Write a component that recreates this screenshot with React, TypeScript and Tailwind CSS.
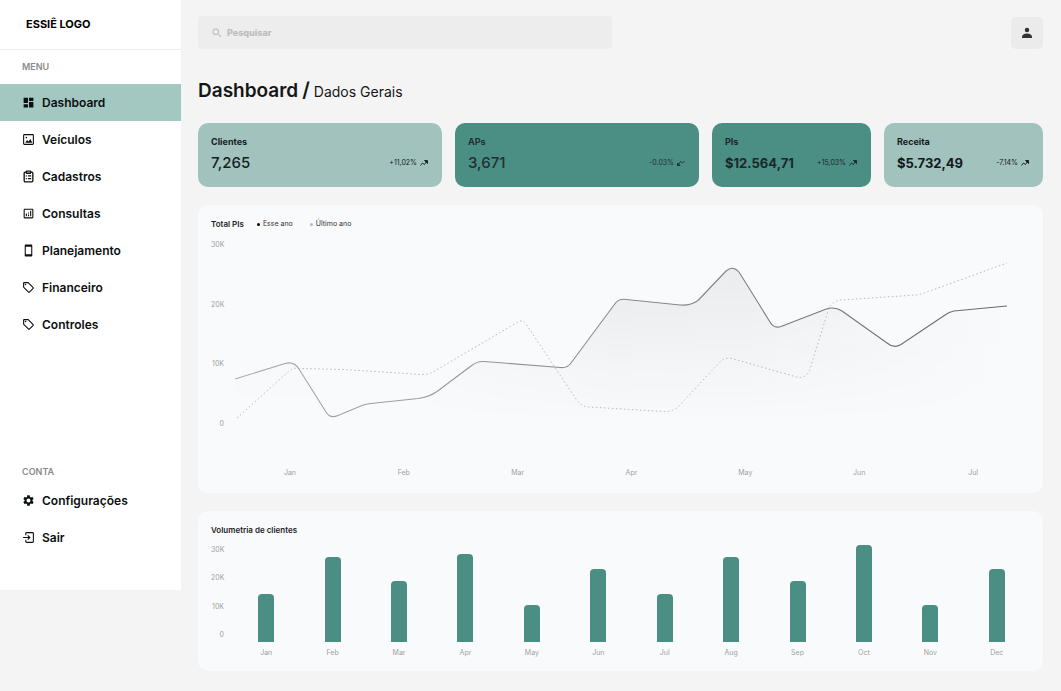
import type { ReactNode } from "react";
import {
  MdDashboard,
  MdOutlineAnalytics,
  MdOutlineSell,
  MdOutlineStayCurrentPortrait,
  MdSearch,
  MdSettings,
} from "react-icons/md";
import { LuClipboardList } from "react-icons/lu";

function PhotoIcon() {
  return (
    <svg viewBox="0 0 24 24" className="w-[13px] h-[13px]" fill="none" stroke="currentColor" strokeWidth="2">
      <rect x="3" y="3" width="18" height="18" rx="1.5" />
      <circle cx="8" cy="8.5" r="1.5" fill="currentColor" stroke="none" />
      <path d="M6 18l3.5-5 2.5 2.5 3.5-4.5L19 18z" fill="currentColor" stroke="none" />
    </svg>
  );
}

function ExitIcon() {
  return (
    <svg viewBox="0 0 24 24" className="w-[13px] h-[13px]" fill="none" stroke="currentColor" strokeWidth="2">
      <path d="M7 8V4.500Q7 3 8.500 3H19.500Q21 3 21 4.500V19.500Q21 21 19.500 21H8.500Q7 21 7 19.500V16" />
      <path d="M2 12h12M10.500 8l4 4-4 4" />
    </svg>
  );
}

function TrendIcon({ dip = false }: { dip?: boolean }) {
  return (
    <svg viewBox="0 0 16 12" className="w-2 h-1.5" fill="none" stroke="currentColor" strokeWidth="1.8">
      {dip ? (
        <>
          <path d="M3 9l4-6 4 3 4-4" />
          <path d="M1 6v5h5z" fill="currentColor" />
        </>
      ) : (
        <>
          <path d="M1 11l4-5 4 3 4-6" />
          <path d="M9 1h6v6z" fill="currentColor" />
        </>
      )}
    </svg>
  );
}

type MenuItem = { label: string; icon: ReactNode; active?: boolean };

const menu: MenuItem[] = [
  { label: "Dashboard", icon: <MdDashboard size={13} />, active: true },
  { label: "Veículos", icon: <PhotoIcon /> },
  { label: "Cadastros", icon: <LuClipboardList size={13} strokeWidth={2.4} /> },
  { label: "Consultas", icon: <MdOutlineAnalytics size={13} /> },
  { label: "Planejamento", icon: <MdOutlineStayCurrentPortrait size={13} /> },
  { label: "Financeiro", icon: <MdOutlineSell size={13} /> },
  { label: "Controles", icon: <MdOutlineSell size={13} /> },
];

const account: MenuItem[] = [
  { label: "Configurações", icon: <MdSettings size={13} /> },
  { label: "Sair", icon: <ExitIcon /> },
];

const stats = [
  { label: "Clientes", value: "7,265", change: "+11,02%", card: "bg-[#a1c2bd] text-[#14211f]", number: "text-[15px] font-medium" },
  { label: "APs", value: "3,671", change: "-0.03%", dip: true, card: "bg-[#4b8f84] text-[#242e33]", number: "text-[15px] font-medium" },
  { label: "PIs", value: "$12.564,71", change: "+15,03%", card: "bg-[#4b8f84] text-[#1c262a]", number: "text-[13px] font-bold" },
  { label: "Receita", value: "$5.732,49", change: "-7.14%", card: "bg-[#a1c2bd] text-[#111a1a]", number: "text-[13px] font-bold" },
];

const scale = ["30K", "20K", "10K", "0"];
const lineMonths = ["Jan", "Feb", "Mar", "Apr", "May", "Jun", "Jul"];

const bars = [
  { month: "Jan", height: 48 },
  { month: "Feb", height: 85 },
  { month: "Mar", height: 61 },
  { month: "Apr", height: 88 },
  { month: "May", height: 37 },
  { month: "Jun", height: 73 },
  { month: "Jul", height: 48 },
  { month: "Aug", height: 85 },
  { month: "Sep", height: 61 },
  { month: "Oct", height: 97 },
  { month: "Nov", height: 37 },
  { month: "Dec", height: 73 },
];

const currentYear =
  "M235 379L285 363.5Q294 361 299 369L326 412Q330 419 338 415.500L362 405.500Q366 404 371 403.500L418 398.500Q429 397 437 391.500L471 366Q477 361 484 361.500L560 367.500Q567 368.500 571 363L614 305Q618 299 624 299.300L680 305Q690 306 698 300.500L726 271Q733 265 739 272L770 322Q774 329 781 326.500L825 309.500Q834 306 842 311L887 343Q894 349 901 344.500L945 315Q949 312 954 311L1007 306";

const lastYear =
  "M237 418L288 372Q293 367 299 368.500L343 369.500L383 372L421 374.500Q428 375 433 372L518 322Q523 319 526 324L576 399Q581 407 589 407L664 411.500Q672 412 678 407L719 363Q724 357 732 358.500L795 376.500Q806 380 810 369L828 311Q831 301 841 300L916 295Q922 294 927 292L1007 263";

function MenuLink({ item }: { item: MenuItem }) {
  return (
    <li>
      <a
        href="#"
        aria-current={item.active ? "page" : undefined}
        className={`flex items-center gap-[7px] h-[37px] pl-[22px] text-[12px] font-semibold text-[#0c0f10] ${
          item.active ? "bg-[#a3c7c1]" : ""
        }`}
      >
        {item.icon}
        {item.label}
      </a>
    </li>
  );
}

function Sidebar() {
  return (
    <aside className="w-[181px] shrink-0 self-start bg-white pb-[34px]">
      <div className="h-[50px] flex items-center pl-[26px] border-b border-[#ececec] text-[11px] font-bold text-black">
        ESSIÊ LOGO
      </div>
      <nav>
        <h2 className="h-[34px] flex items-center pl-[22px] text-[9px] font-semibold text-[#8b8b8b]">MENU</h2>
        <ul>
          {menu.map((item) => (
            <MenuLink key={item.label} item={item} />
          ))}
        </ul>
        <h2 className="mt-[119px] h-5 flex items-center pl-[22px] text-[9px] font-semibold text-[#8b8b8b]">CONTA</h2>
        <ul>
          {account.map((item) => (
            <MenuLink key={item.label} item={item} />
          ))}
        </ul>
      </nav>
    </aside>
  );
}

function LineChart() {
  return (
    <section className="mt-[18px] rounded-[10px] bg-[#f9fafc] px-[13px] pt-[13px] pb-[14px]">
      <div className="flex items-center h-3">
        <h2 className="text-[8px] font-semibold text-[#1c1c1c]">Total PIs</h2>
        <span className="flex items-center gap-[3px] ml-[13px] text-[7px] text-[#333]">
          <span className="w-[3px] h-[3px] rounded-full bg-black" />
          Esse ano
        </span>
        <span className="flex items-center gap-[3px] ml-[17px] text-[7px] text-[#333]">
          <span className="w-[3px] h-[3px] rounded-full bg-[#b3b7bd]" />
          Último ano
        </span>
      </div>
      <div className="flex mt-[9px] gap-[9px]">
        <div className="w-[13px] h-[191px] flex flex-col justify-between text-right text-[7px] leading-[12px] text-[#a0a1a3]">
          {scale.map((step) => (
            <span key={step}>{step}</span>
          ))}
        </div>
        <div className="flex-1">
          <svg
            viewBox="233 239 797 221"
            preserveAspectRatio="none"
            className="block w-full h-[221px]"
            role="img"
            aria-label="Total PIs por mês"
          >
            <defs>
              <linearGradient id="fadeDown" x1="0" y1="268" x2="0" y2="420" gradientUnits="userSpaceOnUse">
                <stop offset="0" stopColor="white" />
                <stop offset="1" stopColor="black" />
              </linearGradient>
              <mask id="areaMask" maskUnits="userSpaceOnUse" x="233" y="239" width="797" height="221">
                <rect x="233" y="239" width="797" height="221" fill="url(#fadeDown)" />
              </mask>
              <linearGradient id="area" x1="400" y1="0" x2="1007" y2="0" gradientUnits="userSpaceOnUse">
                <stop offset="0" stopColor="#1c1c1c" stopOpacity="0.01" />
                <stop offset="0.35" stopColor="#1c1c1c" stopOpacity="0.07" />
                <stop offset="0.6" stopColor="#1c1c1c" stopOpacity="0.06" />
                <stop offset="1" stopColor="#1c1c1c" stopOpacity="0" />
              </linearGradient>
              <linearGradient id="stroke" x1="235" y1="0" x2="1007" y2="0" gradientUnits="userSpaceOnUse">
                <stop offset="0" stopColor="#a9abad" />
                <stop offset="1" stopColor="#68696b" />
              </linearGradient>
            </defs>
            <path d={`${currentYear}V424H235Z`} fill="url(#area)" mask="url(#areaMask)" />
            <path d={lastYear} fill="none" stroke="#a9bfc4" strokeDasharray="1.5 2.5" />
            <path d={currentYear} fill="none" stroke="url(#stroke)" strokeWidth="1.1" />
          </svg>
          <div className="grid grid-cols-7 mt-[7px] text-center text-[7px] leading-[12px] text-[#a0a1a3]">
            {lineMonths.map((month) => (
              <span key={month}>{month}</span>
            ))}
          </div>
        </div>
      </div>
    </section>
  );
}

function BarChart() {
  return (
    <section className="mt-[18px] rounded-[10px] bg-[#f9fafc] px-[13px] pt-[13px] pb-3">
      <h2 className="text-[8px] leading-[12px] font-semibold text-[#1c1c1c]">Volumetria de clientes</h2>
      <div className="flex mt-2 gap-[9px]">
        <div className="w-[13px] h-[97px] flex flex-col justify-between text-right text-[7px] leading-[12px] text-[#a0a1a3]">
          {scale.map((step) => (
            <span key={step}>{step}</span>
          ))}
        </div>
        <div className="flex-1 grid grid-cols-12">
          {bars.map((bar) => (
            <div key={bar.month} className="flex flex-col items-center h-[115px] justify-end">
              <div className="w-4 rounded-t-[4px] bg-[#4b8f84]" style={{ height: bar.height }} />
              <span className="mt-[5px] text-[7px] leading-[12px] text-[#a0a1a3]">{bar.month}</span>
            </div>
          ))}
        </div>
      </div>
    </section>
  );
}

export default function App() {
  return (
    <div className="flex min-h-screen bg-[#f4f4f4] font-['Inter',sans-serif]">
      <Sidebar />
      <main className="flex-1 min-w-0 pl-[17px] pr-[18px] pt-4 pb-5">
        <header className="flex items-center justify-between">
          <label className="flex items-center gap-1 w-[49%] h-[33px] rounded-[4px] bg-[#ededed] pl-[13px] text-[#b9b9b9]">
            <MdSearch size={12} className="shrink-0" />
            <input
              type="search"
              aria-label="Pesquisar"
              placeholder="Pesquisar"
              className="flex-1 min-w-0 bg-transparent outline-none text-[9px] font-extrabold text-[#555] placeholder:text-[#bdbdbd]"
            />
          </label>
          <button type="button" aria-label="Perfil" className="w-8 h-8 rounded-[5px] bg-[#ebebeb] flex items-center justify-center">
            <svg viewBox="0 0 24 24" className="w-3 h-3" fill="#333">
              <circle cx="12" cy="6" r="4.500" />
              <path d="M2 22v-2c0-4 4-7 10-7s10 3 10 7v2z" />
            </svg>
          </button>
        </header>

        <h1 className="flex items-baseline mt-[26px] h-[30px] leading-[30px] text-[19px] font-semibold text-[#161616]">
          Dashboard
          <span className="ml-1 text-[20px]">/</span>
          <span className="ml-1 text-[14px] font-normal">Dados Gerais</span>
        </h1>

        <div className="grid grid-cols-[244fr_244fr_159fr_159fr] gap-[13px] mt-[18px]">
          {stats.map((stat) => (
            <div key={stat.label} className={`h-16 rounded-[10px] pl-[13px] pr-[14px] pt-3 ${stat.card}`}>
              <p className="text-[9px] leading-[14px] font-bold">{stat.label}</p>
              <div className="flex items-center justify-between mt-1">
                <p className={`leading-[20px] ${stat.number}`}>{stat.value}</p>
                <p className="flex items-center gap-[3px] text-[7px]">
                  {stat.change}
                  <TrendIcon dip={stat.dip} />
                </p>
              </div>
            </div>
          ))}
        </div>

        <LineChart />
        <BarChart />
      </main>
    </div>
  );
}
